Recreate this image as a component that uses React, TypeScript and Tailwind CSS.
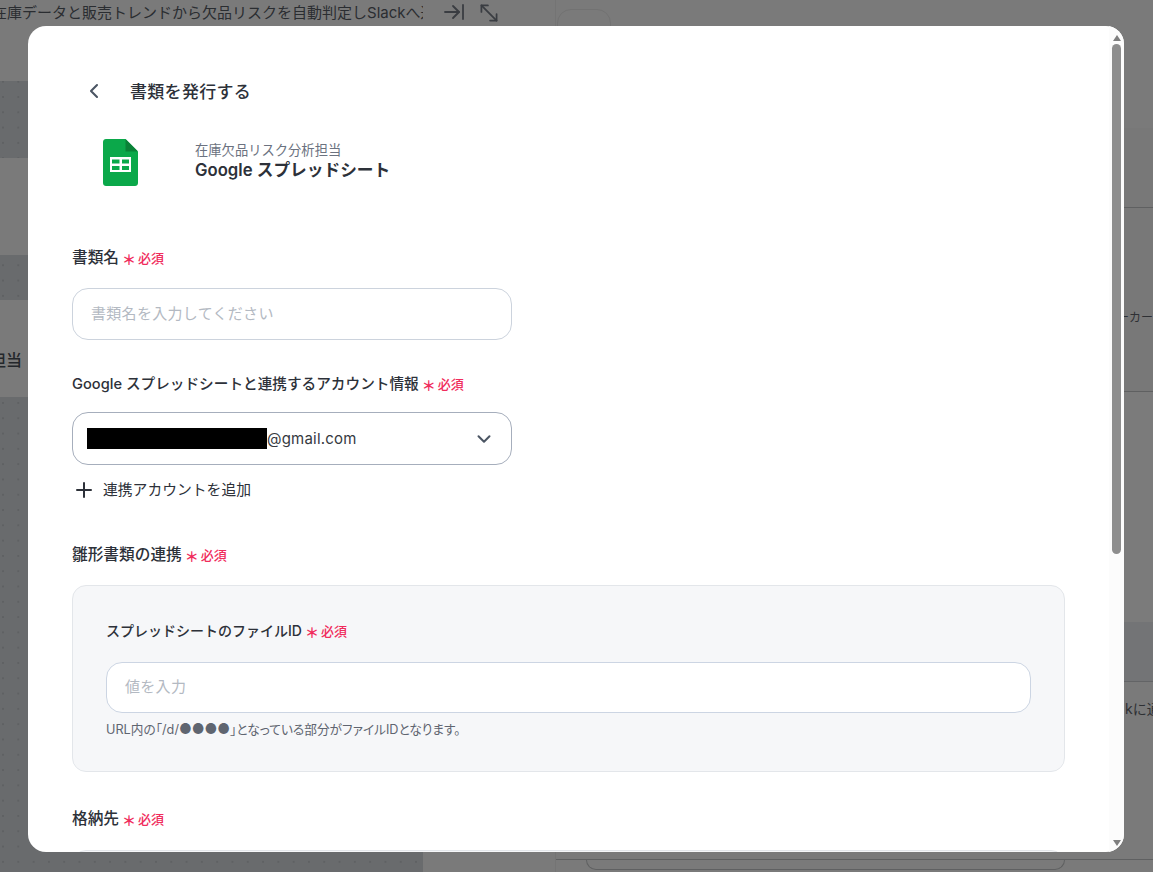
import { ArrowRightToLine, ChevronDown, ChevronLeft, MoveDiagonal2, Plus } from "lucide-react";

const FONT = "font-['Inter','Noto_Sans_CJK_JP',sans-serif]";

function Required() {
  return (
    <span className="ml-[3px] inline-flex items-center text-[#f02c5c]">
      <span className="mt-[3px] w-[16px] text-left text-[14px] font-semibold leading-none">＊</span>
      <span className="text-[13px] font-medium leading-none">必須</span>
    </span>
  );
}

function Label({ size, children }: { size: string; children: React.ReactNode }) {
  return (
    <div className={`flex h-[20px] items-center font-medium leading-[20px] text-[#2d3139] ${size}`}>
      {children}
      <Required />
    </div>
  );
}

function SheetsLogo() {
  return (
    <svg width="35" height="47" viewBox="0 0 35 47">
      <path d="M3 0H22.5L35 12.5V44C35 45.7 33.7 47 32 47H3C1.3 47 0 45.7 0 44V3C0 1.3 1.3 0 3 0Z" fill="#0BA84A" />
      <path d="M22.5 0L35 12.5H22.5Z" fill="#0A8137" />
      <path d="M7 18H28V33H7Z" fill="#fff" />
      <path d="M9 20.5H16.5V24.5H9ZM19 20.5H26V24.5H19ZM9 27H16.5V31H9ZM19 27H26V31H19Z" fill="#0BA84A" />
    </svg>
  );
}

function DotBand({ className }: { className: string }) {
  return (
    <div
      className={`bg-[#696b6d] bg-[radial-gradient(#5f6163_1px,transparent_1.2px)] bg-[size:15.3px_15.3px] bg-[position:-4.65px_-2.45px] bg-fixed ${className}`}
    />
  );
}

function Backdrop() {
  return (
    <div className="flex h-full w-full bg-[#7a7a7a]">
      <div className="flex w-[423px] shrink-0 flex-col">
        <div className="flex h-[81px] shrink-0 items-start overflow-hidden pt-[1px]">
          <span className="-ml-[8px] whitespace-nowrap text-[15px] leading-[24px] text-[#2a2d31]">
            在庫データと販売トレンドから欠品リスクを自動判定しSlackへ通知
          </span>
        </div>
        <DotBand className="h-[77px] shrink-0" />
        <div className="h-[97px] shrink-0" />
        <DotBand className="h-[45px] shrink-0" />
        <div className="flex h-[97px] shrink-0 items-center overflow-hidden pt-[22px]">
          <span className="-ml-[10px] text-[16px] font-medium text-[#24272b]">担当</span>
        </div>
        <DotBand className="flex-1" />
      </div>
      <div className="flex w-[132px] shrink-0 items-start gap-[10px] pl-[19px] text-[#3a3d42]">
        <ArrowRightToLine size={24} strokeWidth={1.8} />
        <MoveDiagonal2 size={26} strokeWidth={1.6} />
      </div>
      <div className="flex min-w-0 flex-1 flex-col border-l border-[#747474]">
        <div className="h-[128px] shrink-0 pt-[9px] pl-[1px]">
          <div className="h-[40px] w-[54px] rounded-t-[14px] border border-[#727272]" />
        </div>
        <div className="h-[80px] shrink-0 border-b border-[#5f6061] bg-[#787878]" />
        <div className="flex h-[184px] shrink-0 items-start justify-end overflow-hidden border-b border-[#5f6061] bg-[#787878] pt-[101px]">
          <span className="whitespace-nowrap text-[12px] leading-[18px] text-[#2e3034]">ーカー</span>
        </div>
        <div className="h-[230px] shrink-0 bg-[#7b7b7b]" />
        <div className="h-[60px] shrink-0 border-b border-[#636466] bg-[#737476]" />
        <div className="h-[177px] shrink-0 overflow-hidden bg-[#7a7a7a] pt-[14px] pl-[569px]">
          <span className="whitespace-nowrap text-[14px] leading-[20px] text-[#2e3034]">kに通知する</span>
        </div>
        <div className="flex-1 border-t border-[#5f6061] pr-[88px] pl-[30px]">
          <div className="h-[10px] rounded-b-[10px] border border-t-0 border-[#5f6061]" />
        </div>
      </div>
    </div>
  );
}

function Scrollbar() {
  return (
    <div className="absolute top-0 right-0 flex h-full w-[15px] flex-col items-center bg-[#fcfcfc]">
      <div className="mt-[9px] h-0 w-0 border-x-[4px] border-b-[6px] border-x-transparent border-b-[#7f7f7f]" />
      <div className="mt-[3px] h-[510px] w-[9px] rounded-full bg-[#8e8e8e]" />
      <div className="mt-auto mb-[6px] h-0 w-0 border-x-[4px] border-t-[6px] border-x-transparent border-t-[#7f7f7f]" />
    </div>
  );
}

export default function App() {
  return (
    <div className={`relative h-[872px] w-[1153px] overflow-hidden ${FONT}`}>
      <Backdrop />

      {/* modal */}
      <div className="absolute top-[26px] left-[28px] h-[826px] w-[1096px] overflow-hidden rounded-[18px] bg-white">
        <div className="w-[1081px] px-[44px]">
          <div className="mt-[50px] flex h-[30px] items-center text-[#2d3139]">
            <ChevronLeft size={24} strokeWidth={2.1} className="ml-[10px] text-[#4b5563]" />
            <span className="ml-[24px] pt-[2px] text-[17px] font-medium leading-[24px] tracking-[0.3px]">書類を発行する</span>
          </div>

          <div className="mt-[33px] flex h-[47px] items-center">
            <div className="ml-[31px]">
              <SheetsLogo />
            </div>
            <div className="-mt-[3px] ml-[57px]">
              <div className="text-[13.3px] leading-[18px] text-[#6b7280]">在庫欠品リスク分析担当</div>
              <div className="text-[16.7px] font-semibold leading-[22px] text-[#2d3139]">Google スプレッドシート</div>
            </div>
          </div>

          <div className="mt-[62px]">
            <Label size="text-[15.7px]">書類名</Label>
          </div>
          <div className="mt-[20px] flex h-[52px] w-[440px] items-center rounded-[16px] border border-[#ccd3dd] px-[18px] text-[15px] tracking-[0.3px] text-[#b3b9c2]">
            書類名を入力してください
          </div>

          <div className="mt-[34px]">
            <Label size="text-[14.65px]">Google スプレッドシートと連携するアカウント情報</Label>
          </div>
          <div className="mt-[18px] flex h-[53px] w-[440px] items-center rounded-[16px] border border-[#a6aebc] pr-[16px] pl-[14px]">
            <span className="h-[21px] w-[180px] bg-black" />
            <span className="pt-[1px] text-[15px] tracking-[0.2px] text-[#353940]">@gmail.com</span>
            <ChevronDown size={22} strokeWidth={2.2} className="ml-auto text-[#4b5563]" />
          </div>
          <div className="mt-[15px] flex h-[20px] items-center text-[14.8px] text-[#2d3139]">
            <Plus size={24} strokeWidth={2} />
            <span className="ml-[7px]">連携アカウントを追加</span>
          </div>

          <div className="mt-[45px]">
            <Label size="text-[15.7px]">雛形書類の連携</Label>
          </div>
          <div className="mt-[20px] h-[187px] w-[993px] rounded-[14px] border border-[#e3e6ea] bg-[#f6f7f9] px-[33px] pt-[35px]">
            <Label size="text-[14px]">スプレッドシートのファイルID</Label>
            <div className="mt-[21px] flex h-[51px] w-[925px] items-center rounded-[16px] border border-[#ccd5e3] bg-white px-[18px] text-[15px] tracking-[0.3px] text-[#b3b9c2]">
              値を入力
            </div>
            <div className="mt-[8px] text-[12.7px] leading-[16px] text-[#5f6570] [font-feature-settings:'palt']">
              URL内の「/d/<span className="text-[14px]">●●●●</span>」となっている部分がファイルIDとなります。
            </div>
          </div>

          <div className="mt-[37px]">
            <Label size="text-[15.7px]">格納先</Label>
          </div>
          <div className="mt-[21px] h-[60px] w-[993px] rounded-[14px] border border-[#e3e6ea] bg-[#f6f7f9]" />
        </div>
        <Scrollbar />
      </div>
    </div>
  );
}
